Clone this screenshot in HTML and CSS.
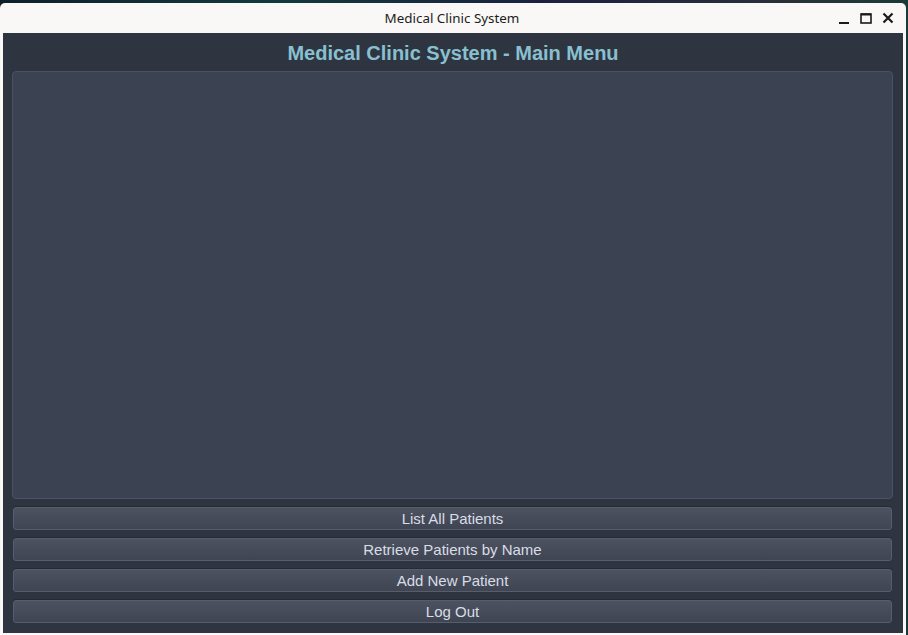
FILE: index.html
```html
<!DOCTYPE html>
<html>
<head>
<meta charset="utf-8">
<link rel="stylesheet" href="styles.css">
</head>
<body>
<div class="window">
  <div class="titlebar">
    <span class="title">Medical Clinic System</span>
    <div class="controls">
      <svg class="ctl" width="14" height="14" viewBox="0 0 14 14"><rect x="2" y="10" width="10" height="2" fill="#1a1a1a"/></svg>
      <svg class="ctl" width="14" height="14" viewBox="0 0 14 14"><rect x="2" y="2" width="10" height="9" fill="none" stroke="#1a1a1a" stroke-width="1.6"/><rect x="2" y="1.5" width="10" height="2" fill="#1a1a1a"/></svg>
      <svg class="ctl" width="14" height="14" viewBox="0 0 14 14"><path d="M2.5 1.5 L11.5 10.5 M11.5 1.5 L2.5 10.5" stroke="#1a1a1a" stroke-width="2.2" fill="none"/></svg>
    </div>
  </div>
  <div class="content">
    <h1 class="heading">Medical Clinic System - Main Menu</h1>
    <div class="panel"></div>
    <div class="buttons">
      <button class="btn">List All Patients</button>
      <button class="btn">Retrieve Patients by Name</button>
      <button class="btn">Add New Patient</button>
      <button class="btn">Log Out</button>
    </div>
  </div>
</div>
</body>
</html>
```
FILE: styles.css
```css
html, body {
  margin: 0;
  padding: 0;
  width: 908px;
  height: 635px;
  overflow: hidden;
}
body {
  background: linear-gradient(90deg, #0f1f2a 0%, #123a3a 30%, #1b2140 60%, #2a2f3a 85%, #1a3a3a 100%);
}
.window {
  margin-top: 3px;
  width: 906px;
  height: 634px;
  background: #f9f8f6;
  border-radius: 5px 5px 0 0;
  display: flex;
  flex-direction: column;
}
.titlebar {
  height: 30px;
  position: relative;
  display: flex;
  align-items: center;
  justify-content: center;
  flex-shrink: 0;
}
.title {
  font-family: "Noto Sans", "DejaVu Sans", sans-serif;
  font-size: 13.4px;
  color: #1c1c1c;
  margin-right: 2px;
}
.controls {
  position: absolute;
  right: 11px;
  top: 9px;
  display: flex;
  gap: 8px;
}
.ctl {
  display: block;
}
.content {
  margin: 0 3px 0 3px;
  height: 600px;
  background: #2e3440;
  padding: 0 10px 10px 9px;
  box-sizing: border-box;
  display: flex;
  flex-direction: column;
}
.heading {
  margin: 0;
  height: 38px;
  padding-top: 2px;
  box-sizing: border-box;
  line-height: 36px;
  text-align: center;
  font-family: "Liberation Sans", Arial, sans-serif;
  font-weight: bold;
  font-size: 20px;
  color: #88c0d0;
  padding-left: 1px;
}
.panel {
  height: 428px;
  box-sizing: border-box;
  background: #3b4252;
  border: 1px solid #4a5164;
  border-radius: 4px;
  flex-shrink: 0;
}
.buttons {
  margin-top: 8px;
  display: flex;
  flex-direction: column;
  gap: 8px;
}
.btn {
  margin: 0 0 0 1px;
  width: 879px;
  height: 23px;
  box-sizing: border-box;
  border: 1px solid #575d6b;
  border-radius: 3px;
  background: linear-gradient(180deg, #4d5260 0%, #404553 100%);
  box-shadow: 0 -1px 0 #252a33;
  color: #d8dde6;
  font-family: "Liberation Sans", Arial, sans-serif;
  font-size: 15px;
  padding: 0;
  line-height: 21px;
  text-align: center;
}
```
